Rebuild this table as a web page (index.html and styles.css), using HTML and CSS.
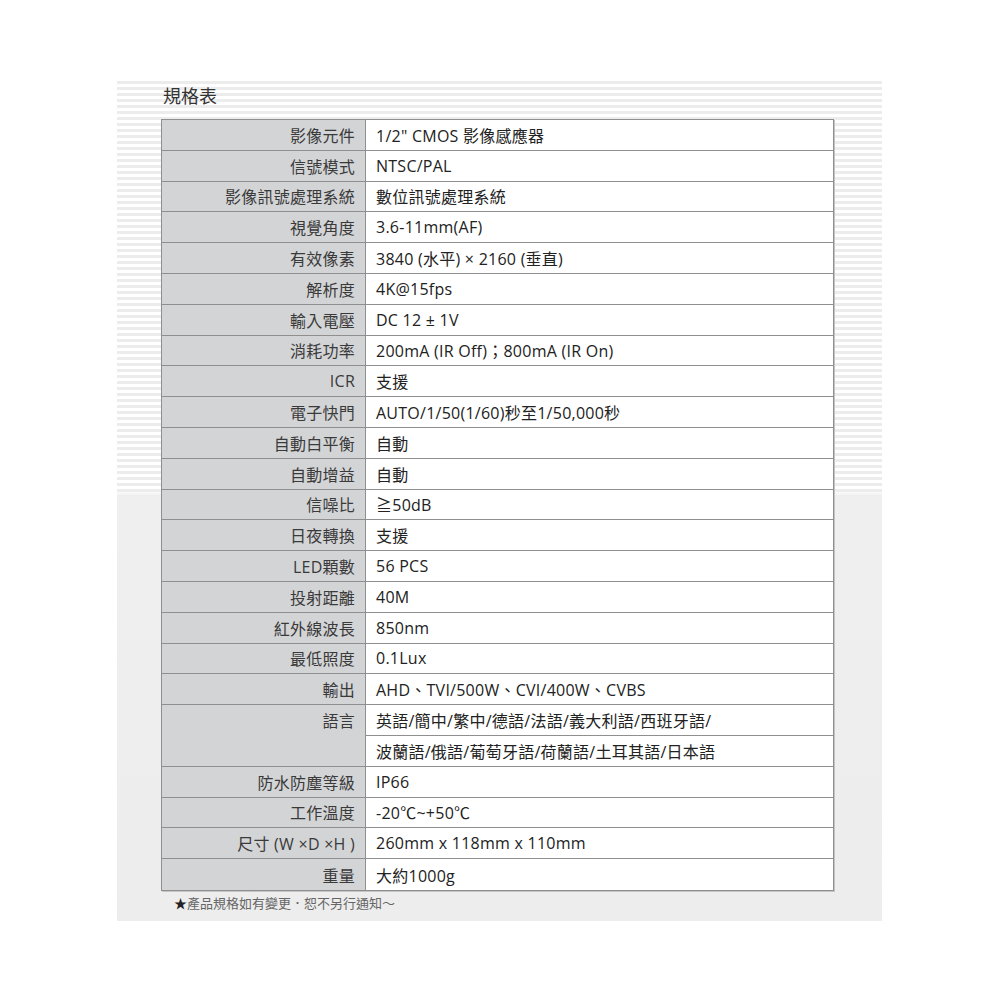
FILE: index.html
```html
<!DOCTYPE html>
<html lang="zh-Hant">
<head>
<meta charset="utf-8">
<link rel="stylesheet" href="styles.css">
</head>
<body>
<div class="panel">
  <h1 class="title">規格表</h1>
  <div class="spec">
    <div class="k">影像元件</div><div class="v">1/2" CMOS 影像感應器</div>
    <div class="k">信號模式</div><div class="v">NTSC/PAL</div>
    <div class="k">影像訊號處理系統</div><div class="v">數位訊號處理系統</div>
    <div class="k">視覺角度</div><div class="v">3.6-11mm(AF)</div>
    <div class="k">有效像素</div><div class="v">3840 (水平) × 2160 (垂直)</div>
    <div class="k">解析度</div><div class="v">4K@15fps</div>
    <div class="k">輸入電壓</div><div class="v">DC 12 ± 1V</div>
    <div class="k">消耗功率</div><div class="v">200mA (IR Off)；800mA (IR On)</div>
    <div class="k">ICR</div><div class="v">支援</div>
    <div class="k">電子快門</div><div class="v">AUTO/1/50(1/60)秒至1/50,000秒</div>
    <div class="k">自動白平衡</div><div class="v">自動</div>
    <div class="k">自動增益</div><div class="v">自動</div>
    <div class="k">信噪比</div><div class="v">≧50dB</div>
    <div class="k">日夜轉換</div><div class="v">支援</div>
    <div class="k">LED顆數</div><div class="v">56 PCS</div>
    <div class="k">投射距離</div><div class="v">40M</div>
    <div class="k">紅外線波長</div><div class="v">850nm</div>
    <div class="k">最低照度</div><div class="v">0.1Lux</div>
    <div class="k">輸出</div><div class="v">AHD、TVI/500W、CVI/400W、CVBS</div>
    <div class="k span2">語言</div><div class="v">英語/簡中/繁中/德語/法語/義大利語/西班牙語/</div>
    <div class="v">波蘭語/俄語/葡萄牙語/荷蘭語/土耳其語/日本語</div>
    <div class="k">防水防塵等級</div><div class="v">IP66</div>
    <div class="k">工作溫度</div><div class="v">-20℃~+50℃</div>
    <div class="k">尺寸 (W ×D ×H )</div><div class="v">260mm x 118mm x 110mm</div>
    <div class="k last">重量</div><div class="v last">大約1000g</div>
  </div>
  <p class="note">★產品規格如有變更．恕不另行通知～</p>
</div>
</body>
</html>
```
FILE: styles.css
```css
html, body {
  margin: 0;
  padding: 0;
  background: #ffffff;
}
body {
  font-family: "Open Sans", "Noto Sans CJK TC", sans-serif;
  color: #333333;
}
.panel {
  margin: 78px 0 0 117px;
  width: 765px;
  height: 843px;
  box-sizing: border-box;
  padding: 4px 0 0 44px;
  background:
    linear-gradient(to bottom, rgba(240,240,240,0) 0px, rgba(240,240,240,0) 410px, #efefef 420px, #ededed 843px),
    repeating-linear-gradient(to bottom, #ffffff 0px, #ffffff 3px, #ececec 3px, #ececec 6px);
}
.title {
  margin: 0 0 0 2px;
  font-family: "Noto Sans CJK TC", sans-serif;
  font-size: 18px;
  font-weight: normal;
  line-height: 26px;
  height: 37px;
  color: #333;
}
.spec {
  width: 673px;
  box-sizing: border-box;
  display: grid;
  grid-template-columns: 204px 1fr;
  grid-auto-rows: 30.8px;
  border: 1px solid #8f8f8f;
  box-shadow: 1px 1px 0 #c4c4c4;
  background: #ffffff;
  font-size: 16px;
  letter-spacing: 0.25px;
}
.k, .v {
  display: flex;
  align-items: center;
  box-sizing: border-box;
  border-bottom: 1px solid #8f8f8f;
  white-space: nowrap;
}
.k {
  justify-content: flex-end;
  padding-right: 10px;
  background: #d3d4d6;
  border-right: 1px solid #8f8f8f;
  color: #3a3a3a;
}
.v {
  padding-left: 10px;
  color: #222;
}
.span2 {
  grid-row: span 2;
  align-items: flex-start;
  padding-top: 3px;
}
.last {
  border-bottom: none;
}
.note {
  margin: 2px 0 0 13px;
  font-family: "Noto Sans CJK TC", sans-serif;
  font-size: 13px;
  color: #666;
}
.note::first-letter {
  color: #222;
}
```
